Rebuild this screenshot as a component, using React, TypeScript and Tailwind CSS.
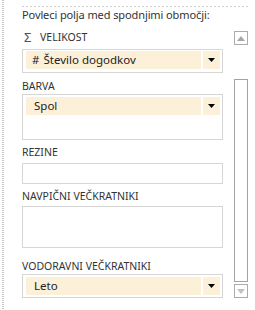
import React from "react";

const font = { fontFamily: '"Noto Sans", "Open Sans", sans-serif' };

function Arrow() {
  return (
    <div className="w-[17px] h-[18px] bg-[#fdf0d9] flex items-center justify-center shrink-0">
      <svg width="7" height="4" viewBox="0 0 7 4">
        <path d="M0 0H7L3.5 4Z" fill="#000" />
      </svg>
    </div>
  );
}

function Item({ label, hash }: { label: string; hash?: boolean }) {
  return (
    <div className="flex gap-[2px] h-[18px]">
      <div className="flex-1 bg-[#fdf0d9] flex items-center text-[11.5px] text-[#222] leading-none">
        {hash ? <span className="ml-[6px] mr-[4px]">#</span> : <span className="ml-[8px]" />}
        <span>{label}</span>
      </div>
      <Arrow />
    </div>
  );
}

function Label({ children, className }: { children: React.ReactNode; className: string }) {
  return (
    <div className={`text-[10.5px] leading-[14px] h-[14px] text-[#333] uppercase ${className}`}>{children}</div>
  );
}

export default function App() {
  return (
    <div className="w-[255px] h-[310px] bg-white flex overflow-hidden" style={font}>
      <div className="ml-[2px] w-[2px] h-full bg-[repeating-linear-gradient(to_bottom,#c8c8c8_0px,#c8c8c8_1px,transparent_1px,transparent_2px)]" />
      <div className="ml-[18px] w-[226px] flex flex-col">
        <div className="mt-[6px] h-[1px] w-[226px] bg-[repeating-linear-gradient(to_right,#d0d0d0_0px,#d0d0d0_2px,transparent_2px,transparent_4px)]" />
        <div className="mt-[1px] text-[11px] leading-[14px] h-[14px] text-[#333] tracking-[-0.1px]">Povleci polja med spodnjimi območji:</div>
        <div className="flex">
          <div className="w-[202px] flex flex-col">
            <div className="mt-[8px] flex items-center h-[14px] text-[10.5px] leading-[14px] text-[#333]">
              <span className="ml-[2px] text-[13px] text-[#555] w-[16px]">Σ</span>
              <span>VELIKOST</span>
            </div>
            <div className="mt-[5px] border border-[#d6d6d6] pl-[3px] pr-[2px] pt-[1px] h-[24px]">
              <Item label="Število dogodkov" hash />
            </div>
            <Label className="mt-[6px]">BARVA</Label>
            <div className="mt-[1px] border border-[#d6d6d6] pl-[3px] pr-[2px] pt-[2px] h-[46px]">
              <Item label="Spol" />
            </div>
            <Label className="mt-[5px]">REZINE</Label>
            <div className="mt-[4px] border border-[#d6d6d6] h-[21px]" />
            <Label className="mt-[5px]">NAVPIČNI VEČKRATNIKI</Label>
            <div className="mt-[3px] border border-[#d6d6d6] h-[42px]" />
            <Label className="mt-[11px]">VODORAVNI VEČKRATNIKI</Label>
            <div className="mt-[1px] border border-[#d6d6d6] pl-[3px] pr-[2px] pt-[2px] h-[24px]">
              <Item label="Leto" />
            </div>
          </div>
          <div className="ml-[11px] w-[14px] flex flex-col">
            <div className="mt-[9px] w-[14px] h-[14px] border border-[#ababab] flex items-center justify-center">
              <svg width="8" height="5" viewBox="0 0 8 5"><path d="M0 5H8L4 0Z" fill="#a6a6a6" /></svg>
            </div>
            <div className="mt-[34px] w-[14px] h-[203px] border border-[#a3a3a3]" />
            <div className="mt-[2px] w-[14px] h-[14px] border border-[#ababab] flex items-center justify-center">
              <svg width="8" height="5" viewBox="0 0 8 5"><path d="M0 0H8L4 5Z" fill="#c2c2c2" /></svg>
            </div>
          </div>
        </div>
      </div>
    </div>
  );
}
